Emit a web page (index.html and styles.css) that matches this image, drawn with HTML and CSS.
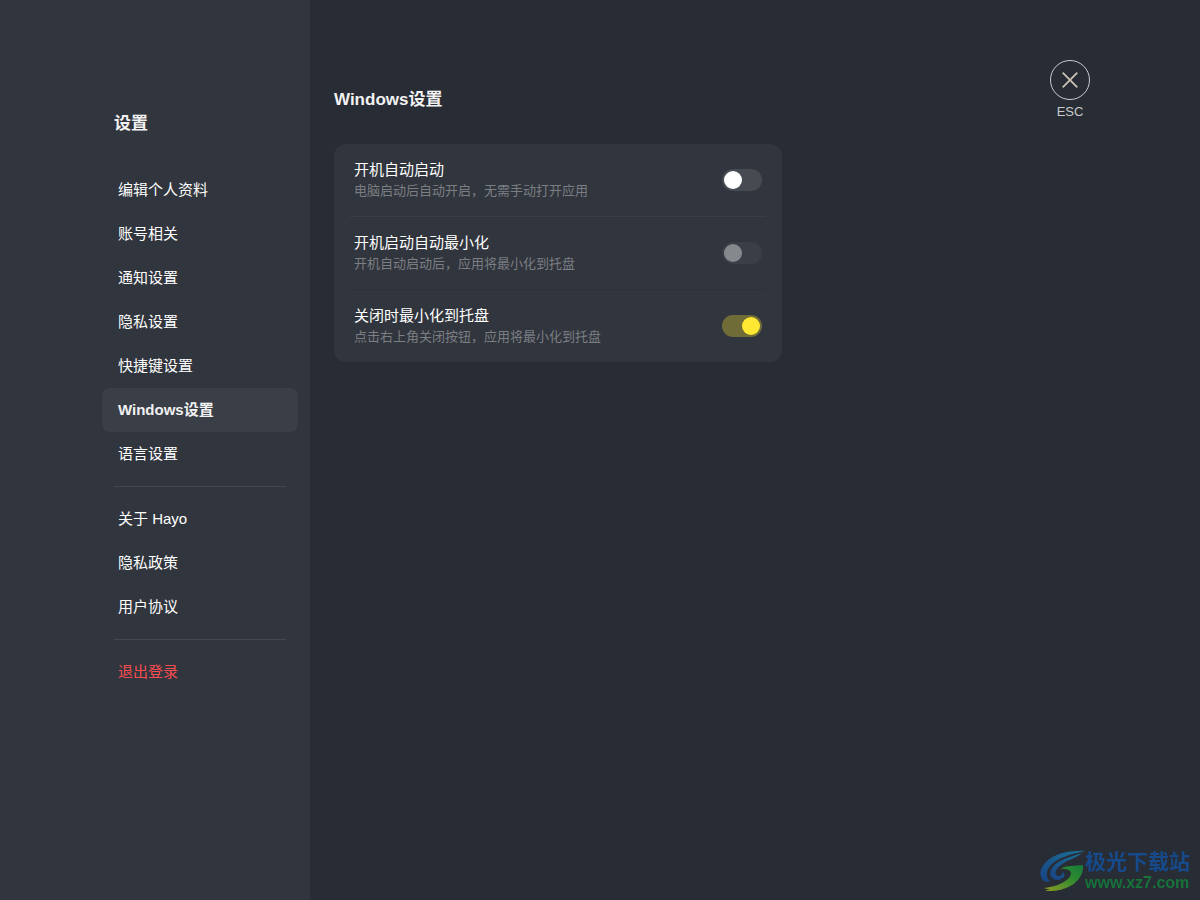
FILE: index.html
```html
<!DOCTYPE html>
<html lang="zh-CN">
<head>
<meta charset="utf-8">
<meta name="viewport" content="width=device-width, initial-scale=1">
<title>Windows设置</title>
<link rel="stylesheet" href="styles.css">
</head>
<body>
<div class="app">
  <aside class="sidebar">
    <h1 class="sidebar-title">设置</h1>
    <nav class="menu">
      <a class="menu-item" href="#profile">编辑个人资料</a>
      <a class="menu-item" href="#account">账号相关</a>
      <a class="menu-item" href="#notify">通知设置</a>
      <a class="menu-item" href="#privacy">隐私设置</a>
      <a class="menu-item" href="#hotkeys">快捷键设置</a>
      <a class="menu-item active" href="#windows" aria-current="page">Windows设置</a>
      <a class="menu-item" href="#language">语言设置</a>
      <hr class="menu-divider">
      <a class="menu-item" href="#about">关于 Hayo</a>
      <a class="menu-item" href="#policy">隐私政策</a>
      <a class="menu-item" href="#terms">用户协议</a>
      <hr class="menu-divider">
      <button class="menu-item logout" type="button">退出登录</button>
    </nav>
  </aside>
  <main class="main">
    <section class="content">
      <h2 class="content-title">Windows设置</h2>
      <div class="card">
        <div class="row">
          <label class="row-text" for="autostart">
            <span class="row-title">开机自动启动</span>
            <span class="row-desc">电脑启动后自动开启，无需手动打开应用</span>
          </label>
          <input class="switch" type="checkbox" role="switch" id="autostart">
        </div>
        <div class="row">
          <label class="row-text" for="startmin">
            <span class="row-title">开机启动自动最小化</span>
            <span class="row-desc">开机自动启动后，应用将最小化到托盘</span>
          </label>
          <input class="switch" type="checkbox" role="switch" id="startmin" disabled>
        </div>
        <div class="row">
          <label class="row-text" for="closemin">
            <span class="row-title">关闭时最小化到托盘</span>
            <span class="row-desc">点击右上角关闭按钮，应用将最小化到托盘</span>
          </label>
          <input class="switch" type="checkbox" role="switch" id="closemin" checked>
        </div>
      </div>
    </section>
    <button class="close" type="button">
      <span class="close-ring">
        <svg width="16" height="16" viewBox="0 0 16 16" fill="none" stroke="#c9c2b4" stroke-width="1.8" aria-hidden="true"><path d="M.7.7l14.6 14.6M15.3.7L.7 15.3"/></svg>
      </span>
      <span>ESC</span>
    </button>
  </main>
</div>
<div class="watermark">
  <svg class="watermark-logo" width="46" height="42" viewBox="0 0 46 42" aria-hidden="true">
    <defs>
      <linearGradient id="blue" x1="0" y1="1" x2="1" y2="0"><stop offset="0" stop-color="#184383"/><stop offset="1" stop-color="#1c7196"/></linearGradient>
      <linearGradient id="green" x1="0" y1="1" x2="1" y2="0"><stop offset="0" stop-color="#8f9b24"/><stop offset=".6" stop-color="#2f8a30"/><stop offset="1" stop-color="#167b3b"/></linearGradient>
    </defs>
    <path fill="url(#blue)" d="M45 1C31 0 14 3 5 13C-1 19-1 27 4 31C6 32 8 32 10 31C5 27 6 19 12 14C19 8 30 4 45 1Z"/>
    <path fill="url(#blue)" d="M42 3C35 9 27 10 21 15C14 20 14 26 19 26C21 26 23 24 22 22C27 24 24 29 18 30C11 30 8 24 12 18C17 10 30 7 42 3Z"/>
    <path fill="url(#green)" d="M20 19C27 15 35 16 43 15C44 25 37 34 26 38C19 41 12 41 5 41L10 39C8 39 6 39 4 38C13 37 23 34 29 28C34 22 29 18 20 19Z"/>
  </svg>
  <div class="watermark-text">
    <span class="watermark-name">极光下载站</span>
    <span class="watermark-url">www.xz7.com</span>
  </div>
</div>
</body>
</html>
```
FILE: styles.css
```css
* { box-sizing: border-box; }

body {
  margin: 0;
  background: #282c34;
  color: #fff;
  font-family: "Liberation Sans", "Noto Sans CJK SC", sans-serif;
  font-size: 15px;
}

.app {
  display: flex;
  min-height: 100vh;
}

.sidebar {
  flex: 0 0 310px;
  padding: 112px 12px 40px 102px;
  background: #31353d;
}

.sidebar-title {
  margin: 0 12px 32px;
  color: #f2f2f3;
  font-size: 17px;
  line-height: 24px;
}

.menu {
  display: flex;
  flex-direction: column;
}

.menu-item {
  padding: 0 16px;
  border: 0;
  border-radius: 8px;
  background: none;
  color: #fff;
  font: inherit;
  line-height: 44px;
  text-align: left;
  text-decoration: none;
}

.menu-item.active {
  background: #3a3e46;
  color: #f2f2f3;
  font-weight: bold;
}

.menu-item.logout { color: #fa4d51; }

.menu-divider {
  width: auto;
  height: 1px;
  margin: 10px 12px;
  border: 0;
  background: #44474f;
}

.main {
  flex: 1;
  display: flex;
  justify-content: space-between;
  align-items: flex-start;
  padding: 60px 110px 40px 24px;
}

.content {
  flex: 0 1 448px;
  padding-top: 28px;
}

.content-title {
  margin: 0 0 32px;
  color: #f2f2f3;
  font-size: 17px;
  line-height: 24px;
}

.card {
  padding: 0 16px;
  border-radius: 12px;
  background: #31353d;
}

.row {
  display: flex;
  align-items: center;
  justify-content: space-between;
  padding: 15px 4px;
}

.row + .row { border-top: 1px solid #3a3e46; }
.row:last-child { border-top-color: #2c3037; }

.row-text {
  display: flex;
  flex-direction: column;
}

.row-title { line-height: 22px; }

.row-desc {
  color: #7b7e83;
  font-size: 13px;
  line-height: 20px;
}

.switch {
  flex: none;
  appearance: none;
  display: flex;
  width: 40px;
  height: 22px;
  margin: 0;
  padding: 2px;
  border-radius: 11px;
  background: #464a51;
}

.switch::before {
  content: "";
  width: 18px;
  height: 18px;
  border-radius: 50%;
  background: #fff;
}

.switch:disabled { background: #3a3e46; }
.switch:disabled::before { background: #85888d; }

.switch:checked {
  justify-content: flex-end;
  background: #706c38;
}

.switch:checked::before { background: #ffe833; }

.close {
  display: flex;
  flex-direction: column;
  align-items: center;
  gap: 4px;
  padding: 0;
  border: 0;
  background: none;
  color: #c9cacc;
  font: inherit;
  font-size: 13px;
  line-height: 16px;
}

.close-ring {
  display: grid;
  place-items: center;
  width: 40px;
  height: 40px;
  border: 1px solid currentColor;
  border-radius: 50%;
}

.watermark {
  position: fixed;
  right: 10px;
  bottom: 8px;
  display: flex;
  align-items: center;
}

.watermark-text {
  display: flex;
  flex-direction: column;
  margin-left: -1px;
}

.watermark-name {
  color: #164a8a;
  font-size: 21px;
  font-weight: bold;
  line-height: 24px;
}

.watermark-url {
  color: #16733a;
  font-size: 16px;
  font-weight: bold;
  line-height: 18px;
}
```
